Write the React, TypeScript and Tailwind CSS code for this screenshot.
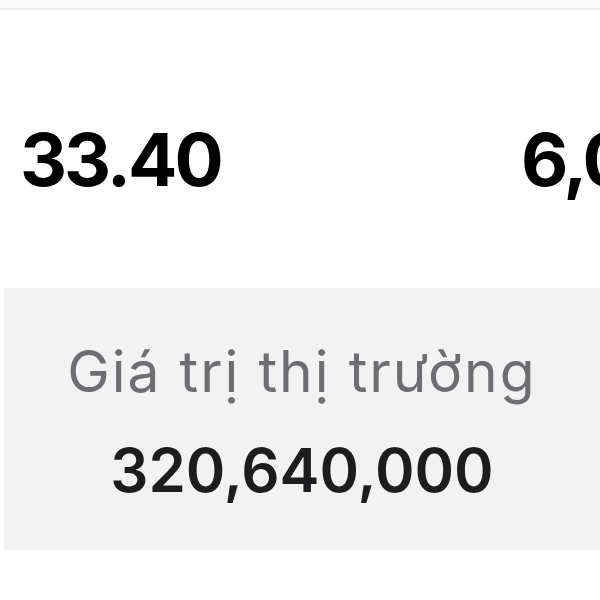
import React from 'react';

const STATS = [
    { value: "33.40" },
    { value: "6,000,000" },
];

export default function App() {
    return (
        <div className="w-[600px] h-[600px] bg-white overflow-hidden flex flex-col font-['Inter','Liberation_Sans',sans-serif]">
            <div className="h-[8px] bg-[#fafafa] shrink-0" />
            <div className="h-[2px] bg-[#ececec] shrink-0" />

            <div className="h-[278px] pt-[21px] flex items-center overflow-hidden shrink-0">
                <div className="w-[521px] shrink-0 pl-[20px]">
                    <span className="text-[73px] leading-none font-bold text-black tracking-[-3px]">{STATS[0].value}</span>
                </div>
                <div className="shrink-0 whitespace-nowrap">
                    <span className="text-[73px] leading-none font-bold text-black tracking-[-3px]">{STATS[1].value}</span>
                </div>
            </div>

            <div className="h-[262px] ml-[4px] bg-[#f2f2f2] flex flex-col items-center pt-[55px] gap-[40px] shrink-0">
                <p className="text-[57px] leading-none text-[#6d6d72] tracking-[2px] whitespace-nowrap">Giá trị thị trường</p>
                <p className="text-[60px] leading-none font-semibold text-[#1d1d1f] whitespace-nowrap">320,640,000</p>
            </div>
        </div>
    );
}
